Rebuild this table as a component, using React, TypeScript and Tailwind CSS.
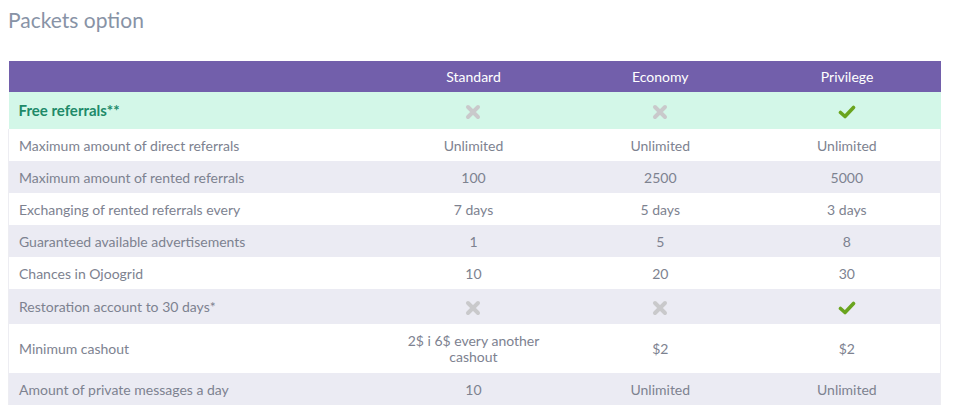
import type { ReactNode } from "react";

const X = () => (
  <svg width="16" height="16" viewBox="0 0 16 16" className="inline-block">
    <path d="M3 3 L13 13 M13 3 L3 13" stroke="#c9c9cb" strokeWidth="4" strokeLinecap="round" />
  </svg>
);

const Check = () => (
  <svg width="18" height="14" viewBox="0 0 18 14" className="inline-block">
    <path d="M2.5 7.5 L7 11.5 L15.5 2.5" stroke="#6aa41e" strokeWidth="3.6" fill="none" strokeLinecap="round" strokeLinejoin="round" />
  </svg>
);

type Row = { label: string; cells: ReactNode[]; tall?: boolean };

const ROWS: Row[] = [
  { label: "Maximum amount of direct referrals", cells: ["Unlimited", "Unlimited", "Unlimited"] },
  { label: "Maximum amount of rented referrals", cells: ["100", "2500", "5000"] },
  { label: "Exchanging of rented referrals every", cells: ["7 days", "5 days", "3 days"] },
  { label: "Guaranteed available advertisements", cells: ["1", "5", "8"] },
  { label: "Chances in Ojoogrid", cells: ["10", "20", "30"] },
  { label: "Restoration account to 30 days*", cells: [<X />, <X />, <Check />] },
  {
    label: "Minimum cashout",
    cells: [
      <span className="block leading-[16px]">
        2$ i 6$ every another
        <br />
        cashout
      </span>,
      "$2",
      "$2",
    ],
    tall: true,
  },
  { label: "Amount of private messages a day", cells: ["10", "Unlimited", "Unlimited"] },
];

export default function App() {
  return (
    <div className="min-h-[417px] bg-white pl-2 pr-[13px] pt-[6px]" style={{ fontFamily: "Lato, 'Open Sans', sans-serif" }}>
      <h1 className="text-[21px] leading-[28px] text-[#8893a6]">Packets option</h1>

      <table className="mt-[27px] w-[933px] border-collapse text-[14px] text-[#7d8290]">
        <colgroup>
          <col className="w-[372px]" />
          <col className="w-[187px]" />
          <col className="w-[187px]" />
          <col className="w-[187px]" />
        </colgroup>
        <thead>
          <tr className="h-[31px] bg-[#725fab] text-white">
            <th />
            <th className="font-normal">Standard</th>
            <th className="font-normal">Economy</th>
            <th className="font-normal">Privilege</th>
          </tr>
        </thead>
        <tbody>
          <tr className="h-[37px] bg-[#d3f7e8]">
            <td className="px-[10px] text-[15px] font-bold text-[#208a68]">Free referrals**</td>
            <td className="text-center"><X /></td>
            <td className="text-center"><X /></td>
            <td className="text-center"><Check /></td>
          </tr>
          {ROWS.map((r, i) => (
            <tr
              key={r.label}
              className={`${r.tall ? "h-[49px]" : i === 5 ? "h-[35px]" : "h-[32px]"} ${
                i % 2 === 1 ? "bg-[#ebebf3]" : "bg-white"
              } border-x border-[#ededf2]`}
            >
              <td className="px-[10px]">{r.label}</td>
              {r.cells.map((c, j) => (
                <td key={j} className="text-center align-middle">
                  {c}
                </td>
              ))}
            </tr>
          ))}
        </tbody>
      </table>
    </div>
  );
}
